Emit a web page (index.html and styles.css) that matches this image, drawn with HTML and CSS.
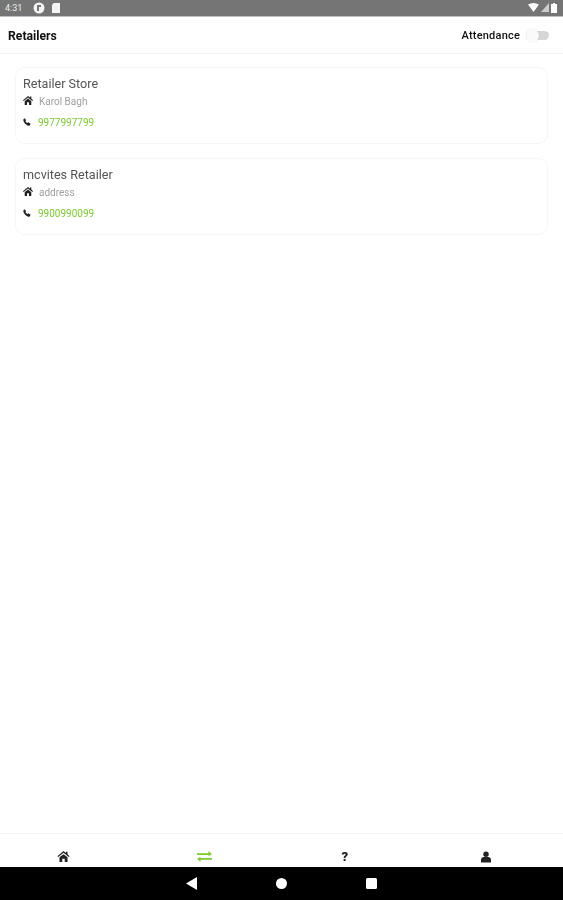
FILE: index.html
```html
<!DOCTYPE html>
<html lang="en">
<head>
    <meta charset="UTF-8">
    <meta name="viewport" content="width=device-width, initial-scale=1.0">
    <title>Retailers</title>
    <link rel="stylesheet" href="styles.css">
</head>
<body>
    <div class="status-bar">
        <div class="status-left">
            <span class="clock">4:31</span>
            <svg class="status-icon" width="12" height="12" viewBox="0 0 12 12"><circle cx="6" cy="6" r="5.5" fill="#f4f4f4"/><path d="M4 3h4v2H6v4H4z" fill="#777"/></svg>
            <svg class="status-icon" width="8" height="10" viewBox="0 0 9 11"><path d="M2 0h7v11H0V2z" fill="#f4f4f4"/></svg>
        </div>
        <div class="status-right">
            <svg width="11" height="9" viewBox="0 0 11 9"><path d="M0 1.500Q5.500-1.500 11 1.500L5.500 9z" fill="#fff"/></svg>
            <svg width="8" height="9" viewBox="0 0 8 9"><path d="M8 0v9H0z" fill="#ccc"/></svg>
            <svg width="6" height="10" viewBox="0 0 6 10"><path d="M2 0h2v1h2v9H0V1h2z" fill="#fff"/></svg>
        </div>
    </div>

    <header class="top-bar">
        <h1>Retailers</h1>
        <div class="attendance">
            <span>Attendance</span>
            <div class="switch"><div class="knob"></div></div>
        </div>
    </header>

    <main class="list">
        <div class="card">
            <h3>Retailer Store</h3>
            <div class="row address">
                <svg class="row-icon" width="10" height="9" viewBox="0 0 10 9"><path d="M5 0l2 1.600V.6h1.300v2L10 4.200 9.300 5 5 1.500.7 5 0 4.200zM1.700 5.200 5 2.600l3.300 2.600V9H6V6.300H4V9H1.700z" fill="#222"/></svg>
                <span>Karol Bagh</span>
            </div>
            <div class="row phone">
                <svg class="row-icon" width="8" height="8" viewBox="0 0 8 8"><path d="M.3 1.500 1.800.2l1.300 2-.8.8c.4.9 1.200 1.700 2.100 2.100l.8-.8 2.500 1.400L6.500 7.800C3.500 7.900.2 4.500.3 1.500z" fill="#222"/></svg>
                <span>9977997799</span>
            </div>
        </div>
        <div class="card">
            <h3>mcvites Retailer</h3>
            <div class="row address">
                <svg class="row-icon" width="10" height="9" viewBox="0 0 10 9"><path d="M5 0l2 1.600V.6h1.300v2L10 4.200 9.300 5 5 1.500.7 5 0 4.200zM1.700 5.200 5 2.600l3.300 2.600V9H6V6.300H4V9H1.700z" fill="#222"/></svg>
                <span>address</span>
            </div>
            <div class="row phone">
                <svg class="row-icon" width="8" height="8" viewBox="0 0 8 8"><path d="M.3 1.500 1.800.2l1.300 2-.8.8c.4.9 1.200 1.700 2.100 2.100l.8-.8 2.500 1.400L6.500 7.800C3.500 7.900.2 4.500.3 1.500z" fill="#222"/></svg>
                <span>9900990099</span>
            </div>
        </div>
    </main>

    <nav class="bottom-nav">
        <div class="nav-item">
            <svg width="13" height="11" viewBox="0 0 10 9"><path d="M5 0l2 1.600V.6h1.300v2L10 4.200 9.300 5 5 1.500.7 5 0 4.200zM1.700 5.200 5 2.600l3.300 2.600V9H6V6.300H4V9H1.700z" fill="#222"/></svg>
        </div>
        <div class="nav-item">
            <svg width="15" height="11" viewBox="0 0 15 11"><path d="M0 2.200h11.500V0L15 3.300l-3.500 1.700V3.900H0zM15 7.100H3.500V6L0 7.700 3.500 11V8.800H15z" fill="#7ccb2c"/></svg>
        </div>
        <div class="nav-item help">?</div>
        <div class="nav-item">
            <svg width="10" height="12" viewBox="0 0 11 12"><circle cx="5.500" cy="3" r="3" fill="#222"/><path d="M0 12V9c0-2 1.500-3 3-3h5c1.500 0 3 1 3 3v3z" fill="#222"/></svg>
        </div>
    </nav>

    <div class="system-nav">
        <svg width="11" height="13" viewBox="0 0 11 13"><path d="M11 0v13L0 6.500z" fill="#fff"/></svg>
        <svg width="11" height="11" viewBox="0 0 11 11"><circle cx="5.500" cy="5.500" r="5.500" fill="#fff"/></svg>
        <svg width="11" height="11" viewBox="0 0 11 11"><rect width="11" height="11" rx="1.500" fill="#fff"/></svg>
    </div>
</body>
</html>
```

FILE: styles.css
```css
* { box-sizing: border-box; }
html, body { height: 100%; }
body { margin: 0; height: 900px; display: flex; flex-direction: column; background: #fff; font-family: Roboto, Arial, sans-serif; color: #111; overflow: hidden; filter: blur(.5px); }

.status-bar { height: 17px; background: #757575; border-bottom: 1px solid #bdbdbd; display: flex; justify-content: space-between; align-items: center; padding: 0 6px 1px 5px; color: #eee; flex: none; }
.status-left { display: flex; align-items: center; gap: 9px; }
.status-left .status-icon + .status-icon { margin-left: -2px; }
.clock { font-size: 9px; width: 19px; }
.status-right { display: flex; align-items: center; gap: 2px; }

.top-bar { height: 37px; display: flex; justify-content: space-between; align-items: center; padding: 0 14px 0 8px; border-bottom: 1px solid #f2f2f2; flex: none; }
.top-bar h1 { margin: 2px 0 0; font-size: 12.2px; font-weight: 700; }
.attendance { display: flex; align-items: center; gap: 6px; font-size: 11px; font-weight: 500; letter-spacing: .2px; }
.switch { position: relative; width: 23px; height: 9px; background: #d6d6d6; border-radius: 5px; }
.knob { position: absolute; left: 0; top: -2px; width: 13px; height: 13px; background: #fafafa; border-radius: 50%; box-shadow: 0 0 2px rgba(0, 0, 0, .12); }

.list { flex: 1; padding: 13px 15px 0; display: flex; flex-direction: column; gap: 14px; }
.card { height: 77px; border: 1px solid #f6f6f6; border-radius: 10px; padding: 8px 7px; box-shadow: 0 0 2px rgba(0, 0, 0, .03); }
.card h3 { margin: 0; font-size: 12.6px; line-height: 15px; font-weight: 400; color: #555; }
.row { display: flex; font-size: 10px; }
.row-icon { flex: none; }
.address { margin-top: 5px; height: 12px; color: #a0a0a0; gap: 6px; align-items: flex-start; }
.phone { margin-top: 8px; height: 12px; color: #7ccb2c; gap: 7px; align-items: center; }

.bottom-nav { height: 34px; border-top: 1px solid #f4f4f4; display: flex; flex: none; }
.nav-item { flex: 1; display: flex; justify-content: center; align-items: center; padding-top: 12px; padding-right: 14px; }
.help { font-size: 13px; font-weight: 900; color: #222; line-height: 1; }

.system-nav { height: 33px; background: #000; flex: none; display: flex; justify-content: center; align-items: center; gap: 79px; }
```
